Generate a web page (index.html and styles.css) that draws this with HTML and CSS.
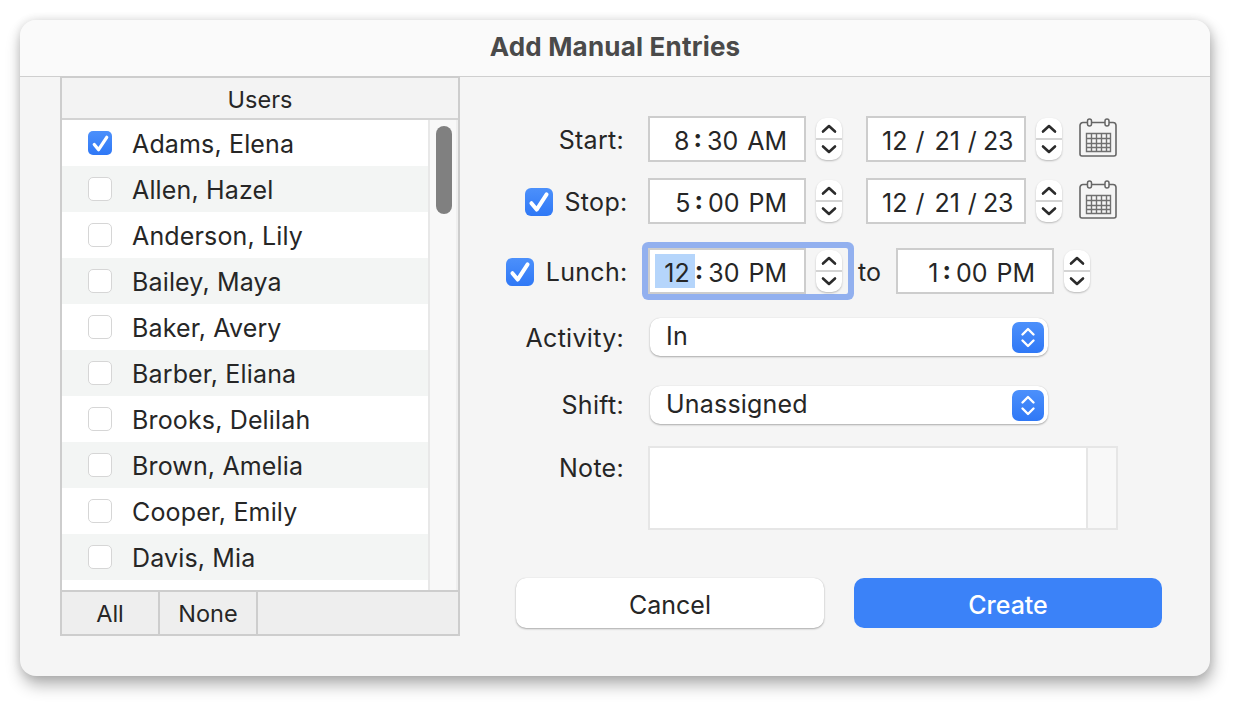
FILE: index.html
```html
<!DOCTYPE html>
<html lang="en">
<head>
<meta charset="utf-8">
<title>Add Manual Entries</title>
<link rel="stylesheet" href="styles.css">
</head>
<body>
<svg class="defs" width="0" height="0" aria-hidden="true">
  <symbol id="tick" viewBox="0 0 24 24"><path d="M5.500 13l4.500 5.500 8.500-13" fill="none" stroke="#fff" stroke-width="3.400" stroke-linecap="round" stroke-linejoin="round"/></symbol>
  <symbol id="stepper" viewBox="0 0 26 42">
    <path d="M7 13.500l6-5.500 6 5.500" fill="none" stroke="#2b2b2b" stroke-width="2.600" stroke-linecap="round" stroke-linejoin="round"/>
    <path d="M7 28.500l6 5.500 6-5.500" fill="none" stroke="#2b2b2b" stroke-width="2.600" stroke-linecap="round" stroke-linejoin="round"/>
    <path d="M0 21h26" stroke="#d4d4d4" stroke-width="2"/>
  </symbol>
  <symbol id="updown" viewBox="0 0 32 31">
    <path d="M10.500 12.500l5.500-5.500 5.500 5.500M10.500 18.500l5.500 5.500 5.500-5.500" fill="none" stroke="#fff" stroke-width="2.400" stroke-linecap="round" stroke-linejoin="round"/>
  </symbol>
  <symbol id="calendar" viewBox="0 0 38 39">
    <path d="M4 4.500h30a3 3 0 0 1 3 3V36a2 2 0 0 1-2 2H3a2 2 0 0 1-2-2V7.500a3 3 0 0 1 3-3z" fill="none" stroke="#666" stroke-width="1.600"/>
    <rect x="8.500" y="1" width="4" height="7" rx="2" fill="#f5f5f5" stroke="#666" stroke-width="1.500"/>
    <rect x="26" y="1" width="4" height="7" rx="2" fill="#f5f5f5" stroke="#666" stroke-width="1.500"/>
    <path d="M7.500 15.500h24v18h-24zM7.500 20.500h24M7.500 25.500h24M7.500 29.500h24M12.500 15.500v18M17.500 15.500v18M22.500 15.500v18M27.500 15.500v18" fill="none" stroke="#707070" stroke-width="1.400"/>
  </symbol>
</svg>

<main class="dialog">
  <header class="titlebar">Add Manual Entries</header>
  <div class="content">
    <section class="users">
      <div class="users-head">Users</div>
      <div class="users-body">
        <ul class="user-list">
          <li class="user"><span class="box on"><svg class="tick"><use href="#tick"/></svg></span><span class="name">Adams, Elena</span></li>
          <li class="user alt"><span class="box"></span><span class="name">Allen, Hazel</span></li>
          <li class="user"><span class="box"></span><span class="name">Anderson, Lily</span></li>
          <li class="user alt"><span class="box"></span><span class="name">Bailey, Maya</span></li>
          <li class="user"><span class="box"></span><span class="name">Baker, Avery</span></li>
          <li class="user alt"><span class="box"></span><span class="name">Barber, Eliana</span></li>
          <li class="user"><span class="box"></span><span class="name">Brooks, Delilah</span></li>
          <li class="user alt"><span class="box"></span><span class="name">Brown, Amelia</span></li>
          <li class="user"><span class="box"></span><span class="name">Cooper, Emily</span></li>
          <li class="user alt"><span class="box"></span><span class="name">Davis, Mia</span></li>
        </ul>
        <div class="scrolltrack"><div class="thumb"></div></div>
      </div>
      <div class="users-foot">
        <div class="foot-btn">All</div>
        <div class="foot-btn">None</div>
      </div>
    </section>

    <section class="form">
      <div class="row row-start">
        <div class="label">Start:</div>
        <div class="field time"><span>8</span><b>:</b><span>30</span><span class="ampm">AM</span></div>
        <svg class="stepper"><use href="#stepper"/></svg>
        <div class="field date"><span>12</span><i class="s1">/</i><span>21</span><i class="s2">/</i><span>23</span></div>
        <svg class="stepper"><use href="#stepper"/></svg>
        <svg class="cal"><use href="#calendar"/></svg>
      </div>
      <div class="row row-stop">
        <div class="label checked"><span class="box big on"><svg class="tick"><use href="#tick"/></svg></span>Stop:</div>
        <div class="field time"><span>5</span><b>:</b><span>00</span><span class="ampm">PM</span></div>
        <svg class="stepper"><use href="#stepper"/></svg>
        <div class="field date"><span>12</span><i class="s1">/</i><span>21</span><i class="s2">/</i><span>23</span></div>
        <svg class="stepper"><use href="#stepper"/></svg>
        <svg class="cal"><use href="#calendar"/></svg>
      </div>
      <div class="row row-lunch">
        <div class="label checked"><span class="box big on"><svg class="tick"><use href="#tick"/></svg></span>Lunch:</div>
        <div class="focus">
          <div class="field time"><span class="sel">12</span><b>:</b><span>30</span><span class="ampm">PM</span></div>
          <svg class="stepper"><use href="#stepper"/></svg>
        </div>
        <div class="to">to</div>
        <div class="field time"><span>1</span><b>:</b><span>00</span><span class="ampm">PM</span></div>
        <svg class="stepper"><use href="#stepper"/></svg>
      </div>
      <div class="row row-select">
        <div class="label label-activity">Activity:</div>
        <div class="select"><span class="select-text">In</span><svg class="updown"><use href="#updown"/></svg></div>
      </div>
      <div class="row row-shift">
        <div class="label">Shift:</div>
        <div class="select"><span class="select-text">Unassigned</span><svg class="updown"><use href="#updown"/></svg></div>
      </div>
      <div class="row row-note">
        <div class="label">Note:</div>
        <div class="note"><div class="note-text"></div><div class="note-bar"></div></div>
      </div>
      <div class="actions">
        <div class="btn">Cancel</div>
        <div class="btn primary">Create</div>
      </div>
    </section>
  </div>
</main>
</body>
</html>
```

FILE: styles.css
```css
* { box-sizing: border-box; }
html, body { margin: 0; padding: 0; }
body {
  width: 1240px;
  height: 706px;
  padding: 20px 30px 30px 20px;
  background: #fff;
  font-family: Inter, "Liberation Sans", sans-serif;
  font-size: 25px;
  color: #262626;
  overflow: hidden;
}
.defs { position: absolute; }
.dialog {
  width: 1190px;
  height: 656px;
  background: #f5f5f5;
  border-radius: 16px;
  box-shadow: 2px 9px 16px rgba(0,0,0,.3), 0 0 10px rgba(0,0,0,.12);
  display: flex;
  flex-direction: column;
  overflow: hidden;
}
.titlebar {
  height: 57px;
  background: #fafafa;
  border-bottom: 1px solid #cfcfcf;
  display: flex;
  align-items: center;
  justify-content: center;
  font-weight: 700;
  font-size: 26px;
  letter-spacing: .2px;
  color: #4a4a4a;
  padding-bottom: 3px;
}
.content { display: flex; padding-left: 40px; }

/* users table */
.users {
  width: 400px;
  height: 560px;
  margin-top: -1px;
  border: 2px solid #cdcdcd;
  display: flex;
  flex-direction: column;
  background: #fff;
}
.users-head {
  height: 42px;
  background: #f3f3f3;
  border-bottom: 2px solid #d3d3d3;
  display: flex;
  align-items: center;
  justify-content: center;
  flex: none;
  font-size: 23.500px;
  padding-top: 2px;
}
.users-body { flex: 1; display: flex; min-height: 0; }
.user-list { list-style: none; margin: 0; padding: 0; width: 366px; flex: none; }
.user {
  height: 46px;
  display: flex;
  align-items: center;
  padding-left: 26px;
}
.name { letter-spacing: .15px; padding-top: 2px; }
.user.alt { background: #f3f5f4; }
.box {
  width: 24px;
  height: 24px;
  border-radius: 5px;
  background: #fff;
  border: 1px solid #d6d6d6;
  margin-right: 20px;
  flex: none;
  display: flex;
  align-items: center;
  justify-content: center;
}
.box.on { background: linear-gradient(#4c90fb, #2f78f6); border: none; }
.box.big { width: 28px; height: 28px; border-radius: 6px; margin-right: 12px; }
.tick { width: 23px; height: 23px; display: block; flex: none; }
.box.big .tick { width: 28px; height: 28px; }
.scrolltrack {
  flex: 1;
  background: #f8f8f8;
  border-left: 2px solid #e8e8e8;
  border-right: 2px solid #efefef;
  padding: 6px 0 0 6px;
}
.thumb { width: 16px; height: 88px; border-radius: 8px; background: #808080; }
.users-foot {
  height: 44px;
  flex: none;
  display: flex;
  background: #eeeeee;
  border-top: 2px solid #cdcdcd;
}
.foot-btn {
  width: 98px;
  border-right: 2px solid #cdcdcd;
  display: flex;
  align-items: center;
  justify-content: center;
  font-size: 23.500px;
  padding-top: 1px;
}

/* form */
.form { flex: 1; display: flex; flex-direction: column; padding-top: 39px; }
.row { display: flex; align-items: center; }
.row-start, .row-stop, .row-lunch { height: 46px; }
.row-stop { margin-top: 16px; }
.row-lunch { margin-top: 24px; }
.row-select { margin-top: 24px; height: 38px; }
.row-shift { margin-top: 30px; height: 38px; }
.row-note { margin-top: 22px; height: 84px; align-items: flex-start; }
.label {
  width: 164px;
  margin-right: 24px;
  flex: none;
  display: flex;
  align-items: center;
  justify-content: flex-end;
  letter-spacing: .3px;
}
.row-start .label, .label.checked, .label-activity { padding-top: 2px; }
.label.checked { width: 167.500px; margin-right: 20.500px; }
.row-note .label { padding-top: 7px; }
.field {
  height: 46px;
  background: #fff;
  border: 2px solid #cdcdcd;
  display: flex;
  align-items: center;
  flex: none;
  padding-top: 3px;
}
.time { width: 158px; justify-content: flex-end; padding-right: 17px; }
.time b { font-weight: 800; margin: 0 5px 0 4px; font-size: 24px; position: relative; top: -2px; }
.ampm { margin-left: 9px; }
.date { width: 160px; margin-left: 24px; padding-left: 14px; }
.date i { font-style: normal; }
.date .s1 { margin: 0 10px 0 8px; }
.date .s2 { margin: 0 6px 0 8px; }
.stepper {
  width: 26px;
  height: 42px;
  flex: none;
  margin-left: 10px;
  background: #fff;
  border-radius: 10px;
  box-shadow: 0 1px 2px rgba(0,0,0,.25);
}
.cal { width: 38px; height: 39px; margin-left: 17px; flex: none; margin-bottom: 4px; }
.focus {
  width: 200px;
  height: 46px;
  flex: none;
  display: flex;
  align-items: center;
  border-radius: 2px;
  box-shadow: 0 0 0 6px #92b0ef;
  background: #f5f5f5;
}
.sel {
  display: block;
  width: 40px;
  height: 34px;
  line-height: 34px;
  margin-top: -3px;
  padding-top: 2px;
  padding-right: 5px;
  text-align: right;
  background: #b5d5fb;
  margin-right: -4px;
}
.to { margin-left: 10px; width: 38px; flex: none; padding-top: 1px; }
.select {
  width: 398px;
  height: 38px;
  margin-left: 2px;
  background: #fff;
  border-radius: 10px;
  box-shadow: 0 1px 2px rgba(0,0,0,.3), 0 0 1px rgba(0,0,0,.15);
  display: flex;
  align-items: center;
  justify-content: space-between;
  padding-left: 16px;
  padding-right: 4px;
}
.select-text { letter-spacing: .2px; padding-bottom: 2px; }
.updown {
  width: 32px;
  height: 31px;
  background: linear-gradient(#4c90fb, #2f78f6);
  border-radius: 7px;
}
.note {
  width: 470px;
  height: 84px;
  background: #fff;
  border: 2px solid #e6e6e6;
  display: flex;
}
.note-text { flex: 1; }
.note-bar { width: 30px; background: #f8f8f8; border-left: 2px solid #e6e6e6; }
.actions { display: flex; margin-top: 48px; margin-left: 56px; gap: 30px; }
.btn {
  width: 308px;
  height: 50px;
  border-radius: 10px;
  background: #fff;
  box-shadow: 0 1px 2px rgba(0,0,0,.3), 0 0 1px rgba(0,0,0,.15);
  display: flex;
  align-items: center;
  justify-content: center;
  padding-top: 4px;
}
.btn.primary { background: #3b82f8; color: #fff; box-shadow: none; font-weight: 500; }
```
